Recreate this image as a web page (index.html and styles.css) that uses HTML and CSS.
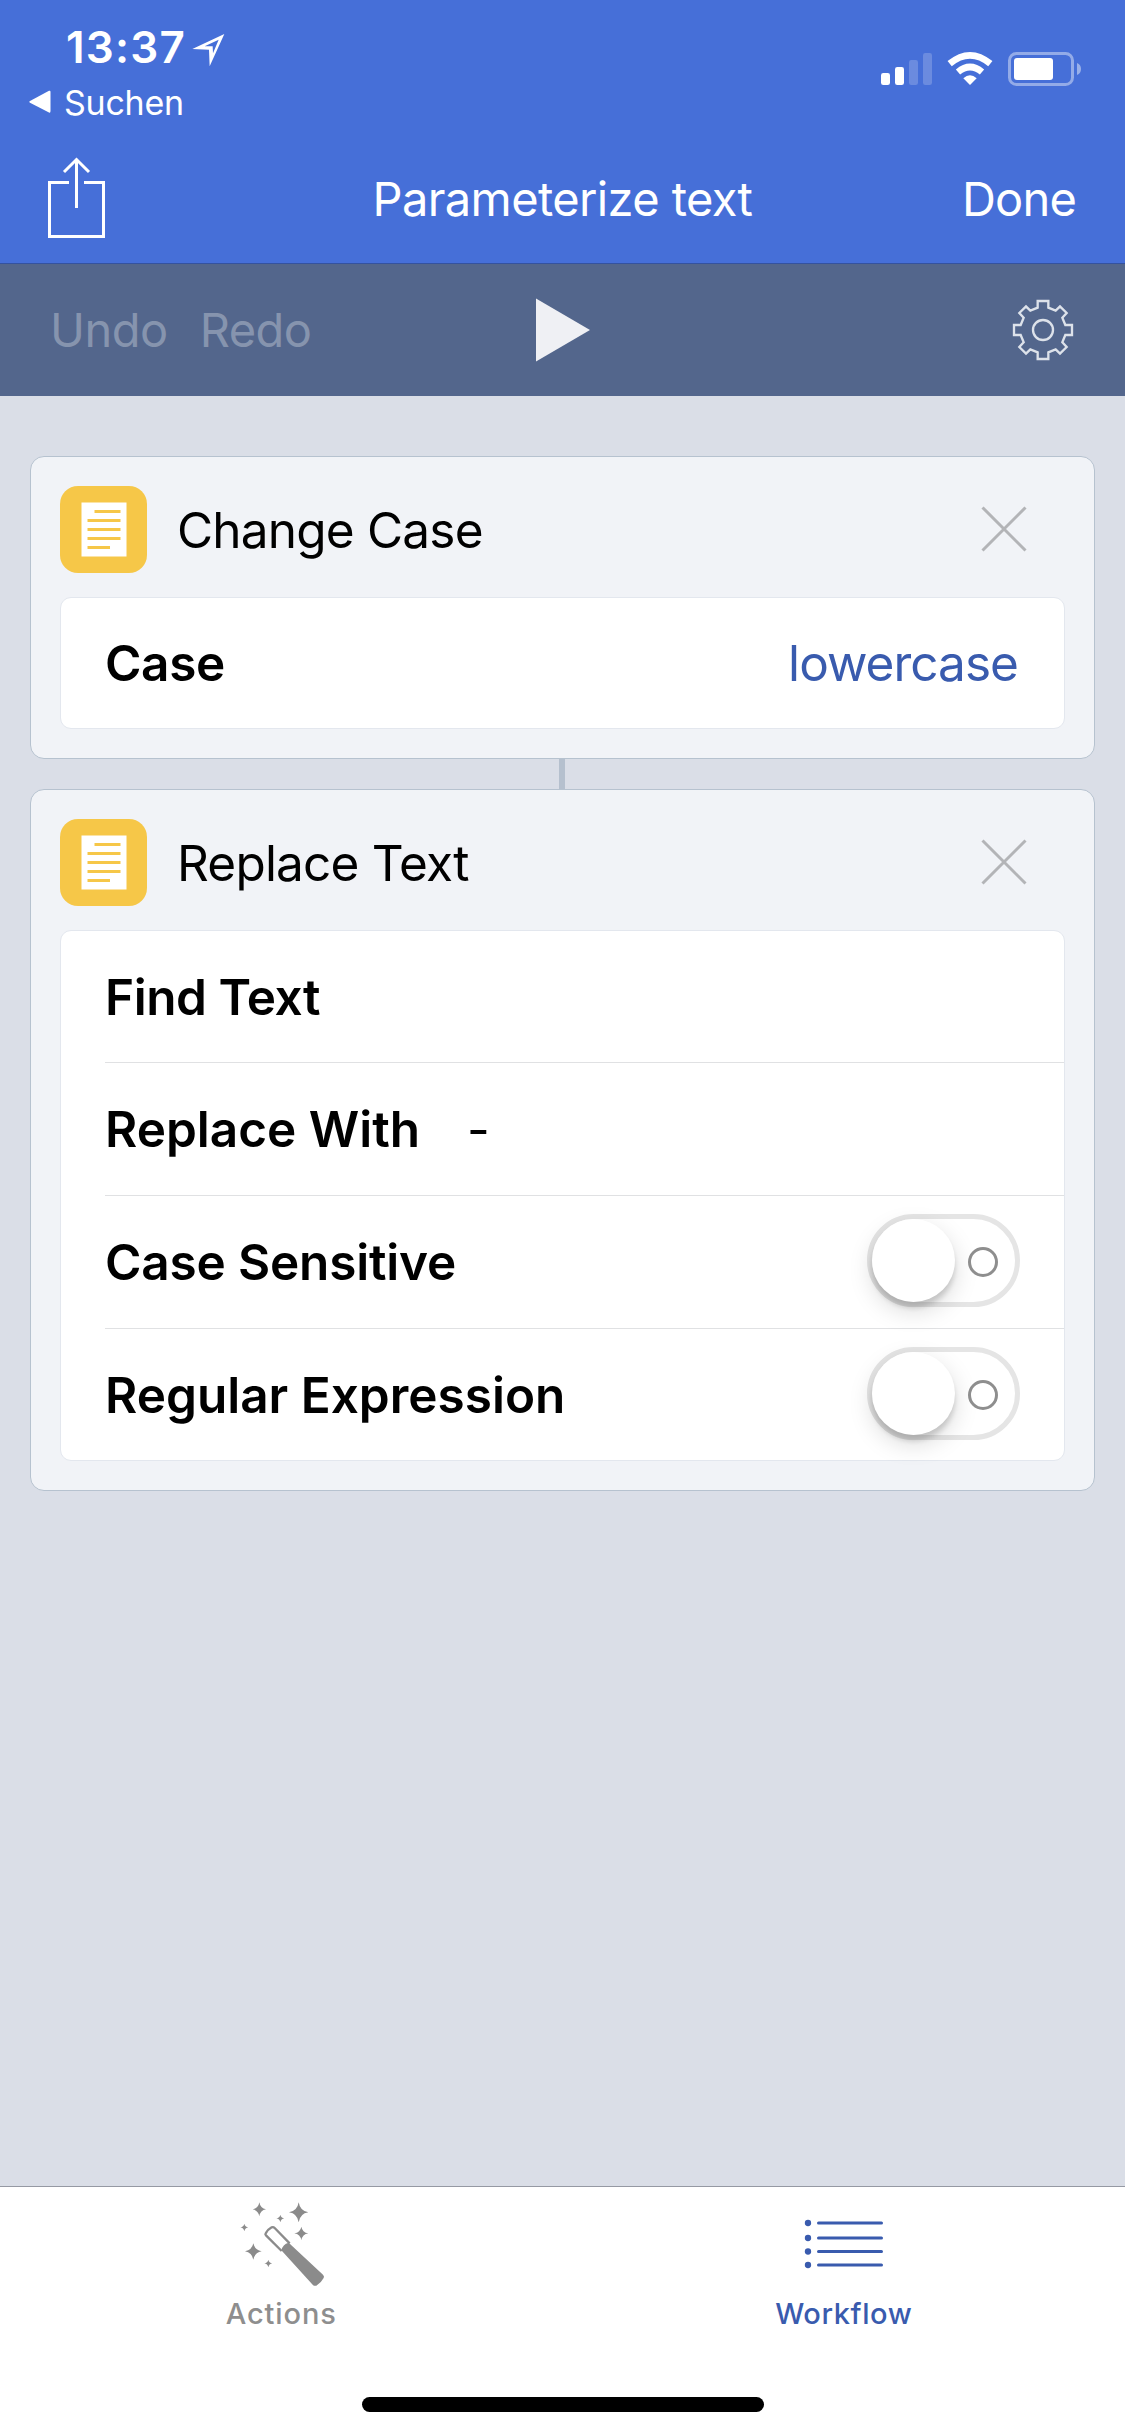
FILE: index.html
```
<!DOCTYPE html>
<html lang="en">
<head>
<meta charset="utf-8">
<title>Parameterize text</title>
<link rel="stylesheet" href="styles.css">
</head>
<body>
<svg class="defs" width="0" height="0" aria-hidden="true">
  <symbol id="doc" viewBox="0 0 87 87">
    <path fill="#fff" d="M21.500 16.500h45v54h-45z"/>
    <path stroke="#f6c748" stroke-width="3" d="M34.500 25.500h26M27.500 34.500h33M27.500 43.500h33M27.500 52.500h33M27.500 61.500h22.500"/>
  </symbol>
  <symbol id="cross" viewBox="0 0 46 46">
    <path stroke="#b3b4b7" stroke-width="3" d="M1.500 1.500l43 43M44.500 1.500l-43 43"/>
  </symbol>
</svg>
<div class="screen">
  <header class="header">
    <div class="status">
      <div class="status-left">
        <div class="clock">
          <span class="time">13:37</span>
          <svg class="locate" viewBox="576 98 99 102" width="33" height="34"><path fill="#fff" fill-rule="evenodd" d="M673 101l-44 97-2-50-50-2zM656 118l-42 20 24 0 1 21z"/></svg>
        </div>
        <div class="back">
          <svg viewBox="0 0 22 24" width="22" height="24"><path fill="#fff" d="M20 .8Q21.500.200 21.500 2V21Q21.500 23.200 20 22.500L1 12.800Q-.5 11.800 1 10.900z"/></svg>
          <span>Suchen</span>
        </div>
      </div>
      <svg class="indicators" viewBox="240 150 606 111" width="202" height="37">
        <g fill="#fff">
          <rect x="243" y="219" width="27" height="36" rx="7"/>
          <rect x="285" y="201" width="27" height="54" rx="7"/>
          <rect x="327" y="180" width="27" height="75" rx="7" opacity=".2"/>
          <rect x="369" y="159" width="27" height="96" rx="7" opacity=".2"/>
          <path d="M510 255l-20-20q20-19 40 0z"/>
          <rect x="642" y="174" width="117" height="66" rx="9"/>
          <path opacity=".45" d="M831 189q12 5 12 18t-12 18z"/>
        </g>
        <g fill="none" stroke="#fff">
          <path stroke-width="20" d="M474 216q36-30 72 0M449 191q61-50 122 0"/>
          <rect x="628.500" y="160.500" width="189" height="93" rx="21" stroke-width="9" opacity=".42"/>
        </g>
      </svg>
    </div>
    <nav class="nav">
      <svg class="share" viewBox="144 471 171 243" width="57" height="81"><path fill="none" stroke="#fff" stroke-width="9" d="M207 547.500h-58.500v162h162v-162H252M229.500 624V480M192 516l37.500-37.500L267 516"/></svg>
      <h1 class="nav-title">Parameterize text</h1>
      <span class="done">Done</span>
    </nav>
  </header>

  <div class="toolbar">
    <div class="history"><span>Undo</span><span class="redo">Redo</span></div>
    <svg viewBox="0 0 54 64" width="54" height="64"><path fill="#eff0f4" d="M0 .5L54 32 0 63.500z"/></svg>
    <svg class="gear" viewBox="336 117 186 186" width="62" height="62">
      <g fill="none" stroke="#dde2ea" stroke-width="7">
        <path d="M413 123h32v20l22 9 13-13 20 20-13 14 9 22h20v30h-20l-9 22 13 14-20 20-13-13-22 9v20h-32v-20l-22-9-13 13-20-20 13-14-9-22h-20v-30h20l9-22-13-14 20-20 13 13 22-9z"/>
        <circle cx="429" cy="210" r="30"/>
      </g>
    </svg>
  </div>

  <main class="canvas">
    <section class="card">
      <div class="card-head">
        <svg class="badge"><use href="#doc"/></svg>
        <h2 class="card-title">Change Case</h2>
        <svg class="close"><use href="#cross"/></svg>
      </div>
      <div class="fields">
        <div class="row"><span class="label ls-case">Case</span><span class="choice">lowercase</span></div>
      </div>
    </section>
    <div class="connector"></div>
    <section class="card">
      <div class="card-head">
        <svg class="badge"><use href="#doc"/></svg>
        <h2 class="card-title">Replace Text</h2>
        <svg class="close"><use href="#cross"/></svg>
      </div>
      <div class="fields">
        <div class="row"><span class="label ls-find">Find Text</span></div>
        <div class="row"><span class="label">Replace With</span><span class="entry">-</span></div>
        <div class="row"><span class="label ls-sens">Case Sensitive</span><span class="switch"><i class="knob"></i><i class="off"></i></span></div>
        <div class="row"><span class="label">Regular Expression</span><span class="switch"><i class="knob"></i><i class="off"></i></span></div>
      </div>
    </section>
  </main>

  <footer class="tabbar">
    <div class="tabs">
      <div class="tab">
        <svg viewBox="111 120 264 264" width="88" height="88">
          <g fill="#8b8b8b">
            <path d="M178 127q3 18 20 21-17 3-20 21-3-18-20-21 17-3 20-21zM296 127q4 26 29 30-25 4-29 30-4-26-29-30 25-4 29-30zM304 200q3 17 21 20-18 3-21 21-3-18-21-21 18-3 21-20zM160 250q4 20 25 24-21 4-25 25-4-21-25-25 21-4 25-24zM241 164q2 10 12 11-10 2-12 12-2-10-12-12 10-1 12-11zM133 191q2 10 12 11-10 2-12 12-2-10-12-12 10-1 12-11zM205 299q2 10 12 11-10 2-12 12-2-10-12-12 10-1 12-11z"/>
            <path d="M244 271q4-18 22-23L369 344q5 5 2 10-8 15-22 23-6 2-11-3z"/>
          </g>
          <path fill="none" stroke="#8b8b8b" stroke-width="7" d="M245 273l-47-47q-3-3-1-6 7-12 18-18 5-2 9 2l45 46"/>
        </svg>
        <span class="tab-label">Actions</span>
      </div>
      <div class="tab active">
        <svg viewBox="180 120 264 264" width="88" height="88">
          <g fill="#395bae"><circle cx="204" cy="189" r="9.500"/><circle cx="204" cy="234" r="9.500"/><circle cx="204" cy="274.500" r="9.500"/><circle cx="204" cy="315" r="9.500"/></g>
          <path stroke="#395bae" stroke-width="9" stroke-linecap="round" d="M235.500 189h189M235.500 234h189M235.500 274.500h189M235.500 315h189"/>
        </svg>
        <span class="tab-label">Workflow</span>
      </div>
    </div>
    <div class="home"></div>
  </footer>
</div>
</body>
</html>
```
FILE: styles.css
```
* { box-sizing: border-box; }
body { margin: 0; font-family: Inter, "Liberation Sans", sans-serif; color: #000; }
h1, h2 { margin: 0; font-weight: 400; }
svg { display: block; flex: none; }
.defs { position: absolute; }
.screen { width: 1125px; height: 2436px; display: flex; flex-direction: column; background: #dadee7; overflow: hidden; }

.header { height: 264px; background: #466fd8; border-bottom: 1px solid #34529f; color: #fff; }
.status { height: 130px; display: flex; justify-content: space-between; padding-right: 43px; }
.status-left { padding-top: 20px; }
.clock { display: flex; align-items: center; height: 54px; padding-left: 66px; gap: 6px; }
.time { font-size: 44px; font-weight: 600; letter-spacing: 1.220px; line-height: 54px; }
.locate { margin-top: 5px; }
.back { display: flex; align-items: center; height: 56px; padding-left: 29px; gap: 13px; font-size: 34px; letter-spacing: -.25px; }
.indicators { margin-top: 50px; }
.nav { display: grid; grid-template-columns: 1fr auto 1fr; align-items: center; height: 133px; padding: 3px 48px 0; font-size: 47px; }
.share { margin-bottom: 2px; }
.nav-title { font-size: 47px; letter-spacing: -.62px; }
.done { justify-self: end; margin-right: 1px; letter-spacing: -.8px; }

.toolbar { display: grid; grid-template-columns: 1fr auto 1fr; align-items: center; height: 132px; padding: 0 51px; background: #53668c; }
.history { display: flex; gap: 32px; margin: 0 0 2px -1px; font-size: 47px; letter-spacing: -.51px; color: #8694ae; }
.redo { letter-spacing: -.58px; }
.gear { justify-self: end; }

.canvas { flex: 1; padding: 60px 30px 0; }
.card { background: #f1f3f7; border: 1px solid #b6c2cf; border-radius: 14px; padding: 0 29px 29px; }
.card-head { display: flex; align-items: center; height: 140px; padding: 5px 38px 0 0; }
.badge { width: 87px; height: 87px; border-radius: 18px; background: #f6c748; }
.card-title { flex: 1; margin-left: 30px; font-size: 49.500px; letter-spacing: -.8px; }
.close { width: 46px; height: 46px; margin-bottom: 1px; }
.connector { width: 6px; height: 30px; margin-left: 529px; background: #b5c0ce; }

.fields { background: #fff; border: 1px solid #e3e7ee; border-radius: 11px; padding-left: 44px; }
.row { display: flex; align-items: center; height: 133px; padding-right: 44px; border-top: 1px solid #e0e1e3; font-size: 49.500px; }
.row:first-child { height: 131px; border-top: 0; }
.row:last-child { height: 132px; }
.row:only-child { height: 130px; }
.label { font-weight: 600; }
.ls-case { letter-spacing: -.36px; }
.ls-find { letter-spacing: -.46px; }
.ls-sens { letter-spacing: -.18px; }
.choice { margin-left: auto; margin-right: 2px; letter-spacing: -.97px; color: #395bae; }
.entry { margin-left: 47px; }
.switch { display: flex; align-items: center; justify-content: space-between; width: 153px; height: 93px; margin: 0 0 3px auto; padding-right: 17px; border: 5px solid #e5e5e5; border-radius: 47px; }
.row:last-child .switch { margin-bottom: 2px; }
.knob { width: 83px; height: 83px; border-radius: 50%; background: #fff; box-shadow: 0 9px 24px rgba(0,0,0,.15), 0 6px 5px rgba(0,0,0,.14); }
.off { width: 30px; height: 30px; margin-top: 2px; border: 3px solid #8e8e8e; border-radius: 50%; }

.tabbar { height: 250px; background: #fff; border-top: 1px solid #9599a3; }
.tabs { display: grid; grid-template-columns: 1fr 1fr; padding-top: 13px; }
.tab { display: flex; flex-direction: column; align-items: center; color: #8e8e8e; }
.tab-label { font-size: 29px; font-weight: 500; letter-spacing: .9px; line-height: 51px; }
.active { color: #395bae; }
.active .tab-label { letter-spacing: .6px; }
.home { width: 402px; height: 15px; margin: 58px auto 0; border-radius: 8px; background: #000; }
```
